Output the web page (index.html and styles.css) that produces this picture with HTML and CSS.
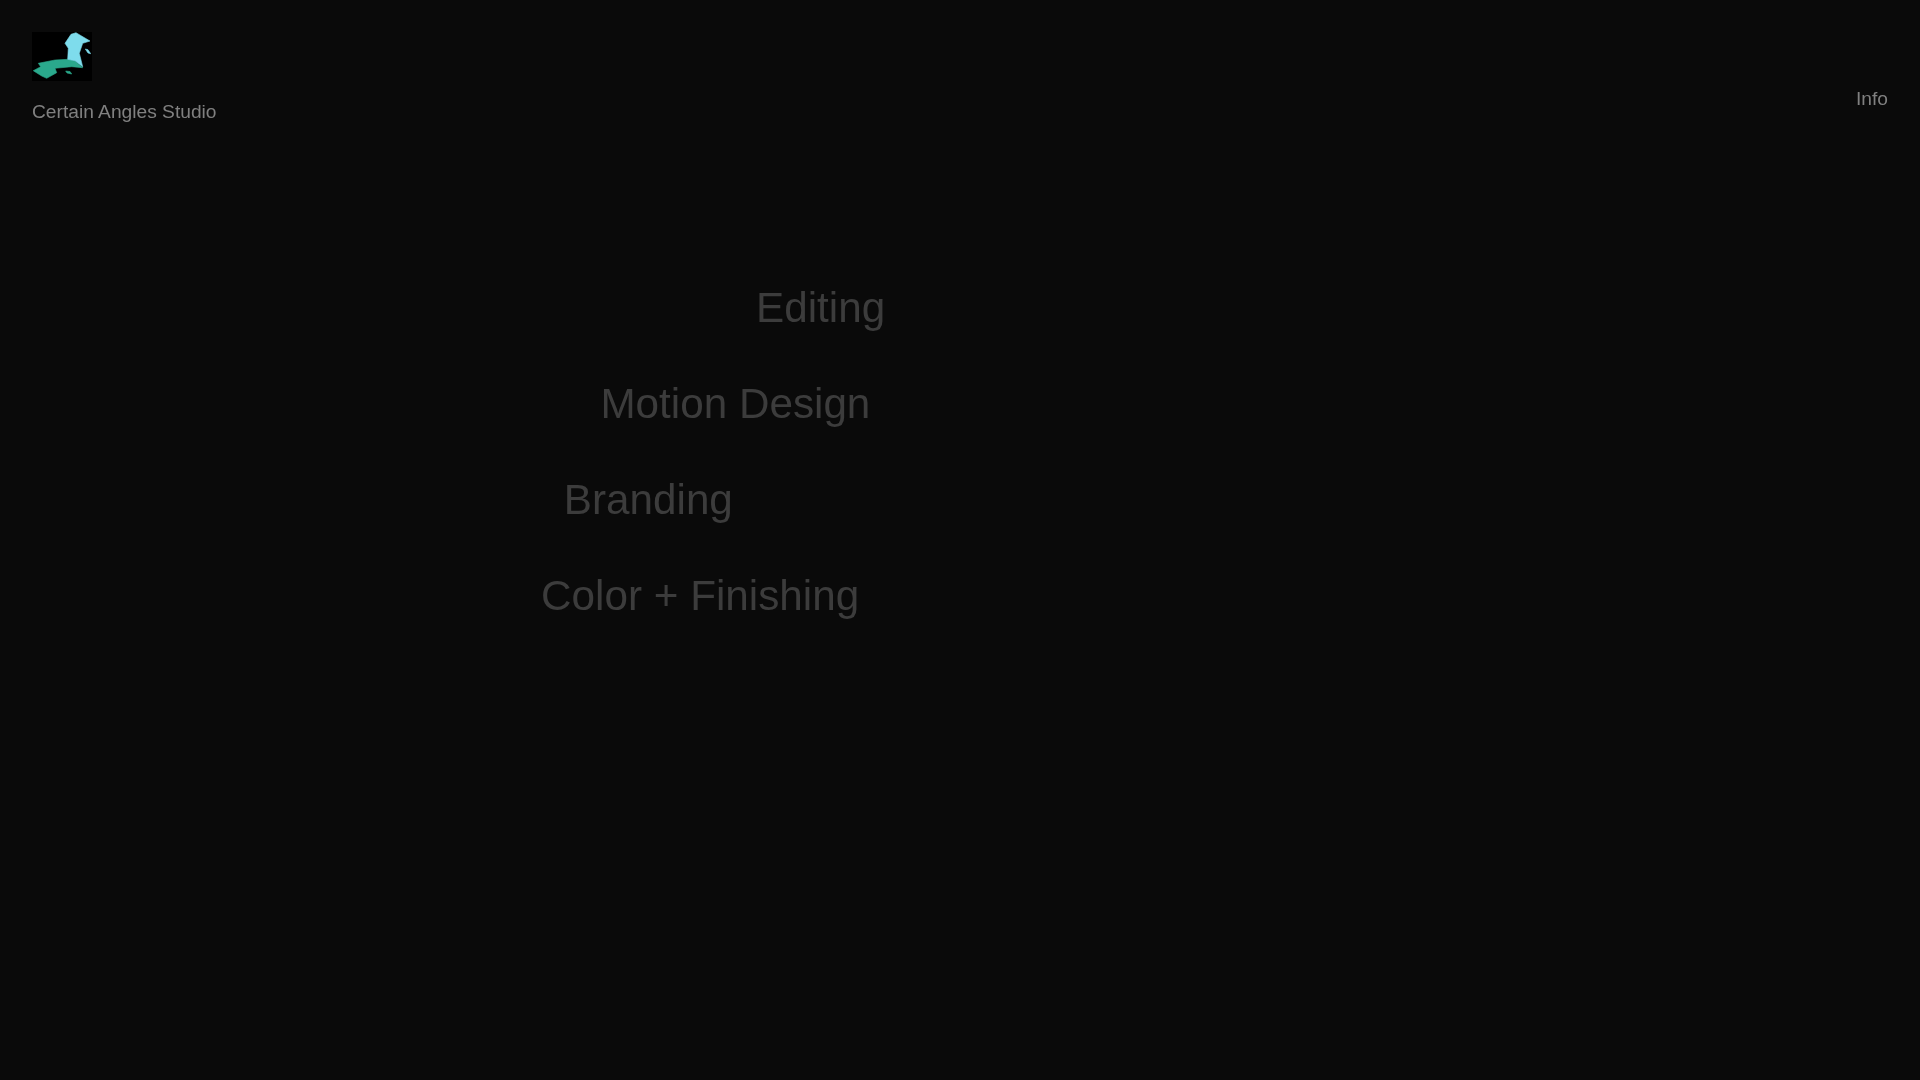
FILE: index.html
```html
<!DOCTYPE html>
<html lang="en">
<head>
<meta charset="utf-8">
<title>Certain Angles Studio</title>
<link rel="stylesheet" href="styles.css">
</head>
<body>
<header class="top">
  <a class="brand" href="#">
    <svg class="logo" viewBox="0 0 60 49" width="60" height="49" aria-hidden="true">
      <rect width="60" height="49" fill="#000"/>
      <g class="logo-art">
        <polygon class="logo-green" points="1.3,38.7 8.7,34.7 6.3,31.3 23,28 36.3,27.3 43,28.7 50.7,35.7 39.7,34.7 23,36.3 24.7,40.7 14.7,46.3 9.7,44"/>
        <polygon class="logo-cyan" points="33,11.3 39,2.3 44,0.7 58,9 50.7,11.3 47.3,21.3 50.7,34.7 43,28.7 35.7,27.3 36.3,16.3"/>
        <polygon class="logo-green" points="33.7,39 38,39.5 39.7,42 35,41"/>
        <polygon class="logo-cyan" points="53.3,17 56,17.7 58.7,21.7 56,21"/>
      </g>
    </svg>
    <span class="brand-name">Certain Angles Studio</span>
  </a>
  <a class="info" href="#">Info</a>
</header>
<main>
  <ul class="services">
    <li class="service service-editing">Editing</li>
    <li class="service service-motion">Motion Design</li>
    <li class="service service-branding">Branding</li>
    <li class="service service-color">Color + Finishing</li>
  </ul>
</main>
</body>
</html>
```
FILE: styles.css
```css
* { box-sizing: border-box; }
html, body { margin: 0; height: 100%; }
body {
  background: #0a0a0a;
  font-family: "Liberation Sans", Arial, sans-serif;
  color: #808080;
  height: 1080px;
  overflow: hidden;
}
a { color: inherit; text-decoration: none; }
.top {
  display: flex;
  justify-content: space-between;
  align-items: flex-start;
  padding: 32px 32px 0;
  will-change: transform;
}
.brand { display: flex; flex-direction: column; align-items: flex-start; gap: 20px; }
.logo { display: block; }
.logo-art { filter: blur(0.6px); }
.logo-green { fill: #2aa98c; stroke: #2aa98c; stroke-width: 0.6; stroke-linejoin: round; }
.logo-cyan { fill: #7edcec; stroke: #7edcec; stroke-width: 0.6; stroke-linejoin: round; }
.brand-name { font-size: 19.2px; line-height: 22px; }
.info { font-size: 19.2px; line-height: 22px; margin-top: 56px; }
.services {
  list-style: none;
  margin: 161px 0 0;
  padding: 0;
  display: flex;
  flex-direction: column;
  gap: 48px;
  font-size: 42.24px;
  line-height: 48px;
  color: #3c3c3c;
  will-change: transform;
}
.service-editing { padding-left: 756px; }
.service-motion { padding-left: 600.4px; }
.service-branding { padding-left: 563.8px; }
.service-color { padding-left: 541.1px; }
```
